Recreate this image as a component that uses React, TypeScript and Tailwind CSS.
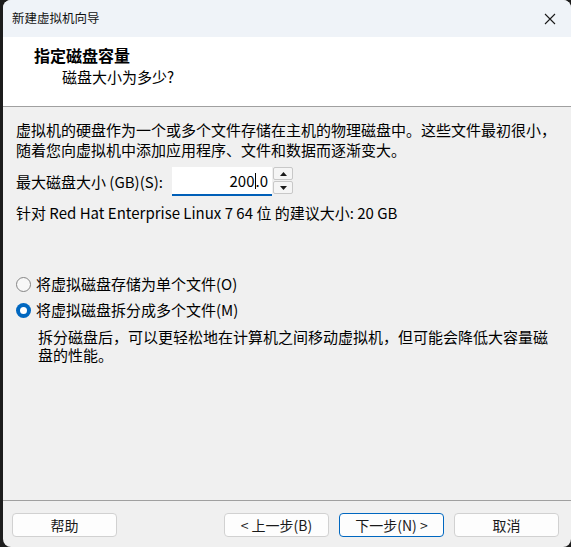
import React from "react";

function WizButton(props: { children: React.ReactNode; primary?: boolean }) {
  const { children, primary } = props;
  return (
    <button
      className={
        primary
          ? "h-[24px] w-[105px] rounded-[4px] border border-[#0067c0] bg-[#fdfdfd] text-[14px] leading-none text-[#1a1a1a]"
          : "h-[24px] w-[105px] rounded-[4px] border border-[#d1d1d1] bg-[#fdfdfd] text-[14px] leading-none text-[#1a1a1a]"
      }
    >
      {children}
    </button>
  );
}

function Radio(props: { checked?: boolean; label: string }) {
  const { checked, label } = props;
  return (
    <div className="flex h-[20px] items-center gap-[5px]">
      {checked ? (
        <span className="flex h-[15px] w-[15px] items-center justify-center rounded-full bg-[#0067c0]">
          <span className="h-[7px] w-[7px] rounded-full bg-white" />
        </span>
      ) : (
        <span className="h-[15px] w-[15px] rounded-full border border-[#858585] bg-[#f7f7f7]" />
      )}
      <span>{label}</span>
    </div>
  );
}

export default function App() {
  return (
    <div className="h-[547px] w-[571px] bg-[#1c1c1c] pl-[3px] font-['Noto_Sans_CJK_SC',sans-serif] text-[15px] text-[#000]">
      <div className="flex h-full flex-col overflow-hidden rounded-[8px] bg-[#f0f0f0]">
        {/* title bar */}
        <div className="flex h-[37px] shrink-0 items-center justify-between bg-[#eff3f8] pl-[9px] pr-[15px]">
          <span className="text-[12.5px] leading-none text-[#111]">新建虚拟机向导</span>
          <svg width="12" height="12" viewBox="0 0 12 12">
            <path d="M1 1L11 11M11 1L1 11" stroke="#1a1a1a" strokeWidth="1.1" fill="none" />
          </svg>
        </div>

        {/* header */}
        <div className="h-[70px] shrink-0 border-b border-[#a0a0a0] bg-white pl-[31px] pt-[8px] leading-[20px]">
          <div className="text-[16px] font-bold">指定磁盘容量</div>
          <div className="mt-[2px] pl-[28px]">磁盘大小为多少?</div>
        </div>

        {/* body */}
        <div className="flex flex-1 flex-col pl-[13px] pr-[12px] pt-[13px] leading-[20px]">
          <p>
            虚拟机的硬盘作为一个或多个文件存储在主机的物理磁盘中。这些文件最初很小，
            <br />
            随着您向虚拟机中添加应用程序、文件和数据而逐渐变大。
          </p>

          <div className="mt-[7px] flex items-center">
            <span className="w-[156px]">最大磁盘大小 (GB)(S):</span>
            <div className="flex h-[29px] w-[100px] items-center justify-end border-b-2 border-[#005fb8] bg-white pr-[4px]">
              <span>200</span>
              <span className="h-[16px] w-px bg-black" />
              <span>.0</span>
            </div>
            <div className="ml-[1px] flex h-[27px] w-[20px] flex-col gap-px self-start">
              <div className="flex flex-1 items-center justify-center rounded-[2px] border border-[#c8c8c8] bg-[#f5f5f5]">
                <svg width="7" height="4" viewBox="0 0 7 4">
                  <path d="M3.5 0L7 4H0Z" fill="#1a1a1a" />
                </svg>
              </div>
              <div className="flex flex-1 items-center justify-center rounded-[2px] border border-[#c8c8c8] bg-[#f5f5f5]">
                <svg width="7" height="4" viewBox="0 0 7 4">
                  <path d="M0 0H7L3.5 4Z" fill="#1a1a1a" />
                </svg>
              </div>
            </div>
          </div>

          <p className="mt-[7px]">针对 Red Hat Enterprise Linux 7 64 位 的建议大小: 20 GB</p>

          <div className="mt-[51px] flex flex-col gap-[6px]">
            <Radio label="将虚拟磁盘存储为单个文件(O)" />
            <Radio checked label="将虚拟磁盘拆分成多个文件(M)" />
          </div>

          <p className="mt-[8px] pl-[22px] leading-[18px]">
            拆分磁盘后，可以更轻松地在计算机之间移动虚拟机，但可能会降低大容量磁
            <br />
            盘的性能。
          </p>
        </div>

        {/* footer */}
        <div className="flex h-[47px] shrink-0 items-start justify-between border-t border-[#a0a0a0] pl-[9px] pr-[12px] pt-[12px]">
          <WizButton>帮助</WizButton>
          <div className="flex gap-[10px]">
            <WizButton>&lt; 上一步(B)</WizButton>
            <WizButton primary>下一步(N) &gt;</WizButton>
            <WizButton>取消</WizButton>
          </div>
        </div>
      </div>
    </div>
  );
}
